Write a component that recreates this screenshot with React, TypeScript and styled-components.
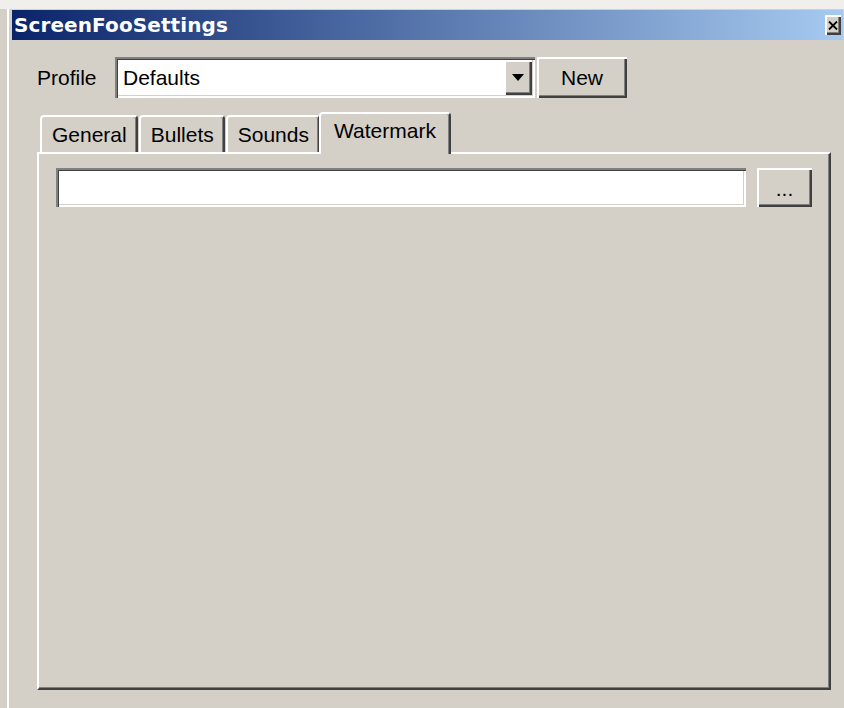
import React from 'react'
import styled, { createGlobalStyle, css } from 'styled-components'

const GlobalStyle = createGlobalStyle`
    html, body {
        margin: 0;
        padding: 0;
    }
    body {
        background: #d4d0c8;
        font-family: 'Liberation Sans', Arial, sans-serif;
    }
`

const raised = css`
    background: #d4d0c8;
    box-shadow: inset 2px 2px #ffffff, inset -2px -2px #404040, inset -3px -3px #808080;
`

const sunken = css`
    background: #ffffff;
    box-shadow: inset 2px 2px #808080, inset 3px 3px #404040, inset -2px -2px #ffffff, inset -3px -3px #d4d0c8;
`

const Screen = styled.div`
    width: 844px;
    height: 708px;
    box-sizing: border-box;
    overflow: hidden;
    display: flex;
    border-top: 9px solid #f1efec;
    padding-left: 7px;
    background: #d4d0c8;
`

const Window = styled.div`
    flex: 1;
    display: flex;
    flex-direction: column;
    border-left: 2px solid #ffffff;
    padding: 1px 1px 0 3px;
`

const TitleBar = styled.div`
    height: 30px;
    flex: none;
    display: flex;
    align-items: center;
    justify-content: space-between;
    padding: 0 2px;
    background: linear-gradient(to right, #0a246a, #a6caf0);
`

const Title = styled.div`
    color: #ffffff;
    font-family: 'DejaVu Sans', Verdana, sans-serif;
    font-weight: bold;
    font-size: 20px;
    letter-spacing: 0.1px;
`

const CloseButton = styled.div`
    ${raised};
    width: 16px;
    height: 20px;
    display: flex;
    align-items: center;
    justify-content: center;
`

const Body = styled.div`
    flex: 1;
    display: flex;
    flex-direction: column;
    padding: 17px 12px 18px 25px;
    font-size: 21px;
    color: #000000;
`

const ProfileRow = styled.div`
    display: flex;
    align-items: center;
`

const Label = styled.span`
    width: 78px;
`

const Combo = styled.div`
    ${sunken};
    width: 420px;
    height: 41px;
    box-sizing: border-box;
    display: flex;
    align-items: center;
    justify-content: space-between;
    padding: 3px 3px 3px 8px;
`

const DropButton = styled.div`
    ${raised};
    width: 28px;
    height: 35px;
    display: flex;
    align-items: center;
    justify-content: center;
`

const PushButton = styled.div<{ $width: number }>`
    ${raised};
    width: ${(p) => p.$width}px;
    height: 41px;
    box-sizing: border-box;
    display: flex;
    align-items: center;
    justify-content: center;
`

const TabStrip = styled.div`
    height: 40px;
    margin-top: 14px;
    display: flex;
    align-items: flex-end;
    gap: 1px;
    padding-left: 3px;
    position: relative;
    z-index: 1;
`

const Tab = styled.div<{ $active?: boolean }>`
    height: ${(p) => (p.$active ? 42 : 37)}px;
    box-sizing: border-box;
    display: flex;
    align-items: center;
    padding: 0 ${(p) => (p.$active ? 13 : 9)}px ${(p) => (p.$active ? 6 : 0)}px ${(p) => (p.$active ? 13 : 10)}px;
    margin: 0 ${(p) => (p.$active ? -2 : 0)}px ${(p) => (p.$active ? -2 : 0)}px;
    background: #d4d0c8;
    border-top: 2px solid #ffffff;
    border-left: 2px solid #ffffff;
    border-right: 2px solid #404040;
    border-radius: 4px 4px 0 0;
    box-shadow: inset -1px 0 #808080;
`

const Panel = styled.div`
    flex: 1;
    border-top: 2px solid #ffffff;
    border-left: 2px solid #ffffff;
    border-right: 2px solid #404040;
    border-bottom: 2px solid #404040;
    box-shadow: inset -1px -1px #808080;
    padding: 14px 17px;
`

const FieldRow = styled.div`
    display: flex;
    gap: 11px;
`

const Field = styled.div`
    ${sunken};
    flex: 1;
    height: 39px;
`

const BrowseButton = styled(PushButton)`
    height: 39px;
    align-items: flex-end;
    padding-bottom: 6px;
`

const tabs = ['General', 'Bullets', 'Sounds', 'Watermark']

const App = () => {
    return (
        <Screen>
            <GlobalStyle />
            <Window>
                <TitleBar>
                    <Title>ScreenFooSettings</Title>
                    <CloseButton>
                        <svg width="10" height="9" viewBox="0 0 10 9">
                            <path d="M1 0.5 L9 8.5 M9 0.5 L1 8.5" stroke="#000" strokeWidth="1.8" />
                        </svg>
                    </CloseButton>
                </TitleBar>
                <Body>
                    <ProfileRow>
                        <Label>Profile</Label>
                        <Combo>
                            <span>Defaults</span>
                            <DropButton>
                                <svg width="12" height="7" viewBox="0 0 12 7">
                                    <path d="M0 0 H12 L6 7 Z" fill="#000" />
                                </svg>
                            </DropButton>
                        </Combo>
                        <PushButton $width={90} style={{ marginLeft: 2 }}>
                            New
                        </PushButton>
                    </ProfileRow>
                    <TabStrip>
                        {tabs.map((t) => (
                            <Tab key={t} $active={t === 'Watermark'}>
                                {t}
                            </Tab>
                        ))}
                    </TabStrip>
                    <Panel>
                        <FieldRow>
                            <Field />
                            <BrowseButton $width={55}>...</BrowseButton>
                        </FieldRow>
                    </Panel>
                </Body>
            </Window>
        </Screen>
    )
}

export default App
